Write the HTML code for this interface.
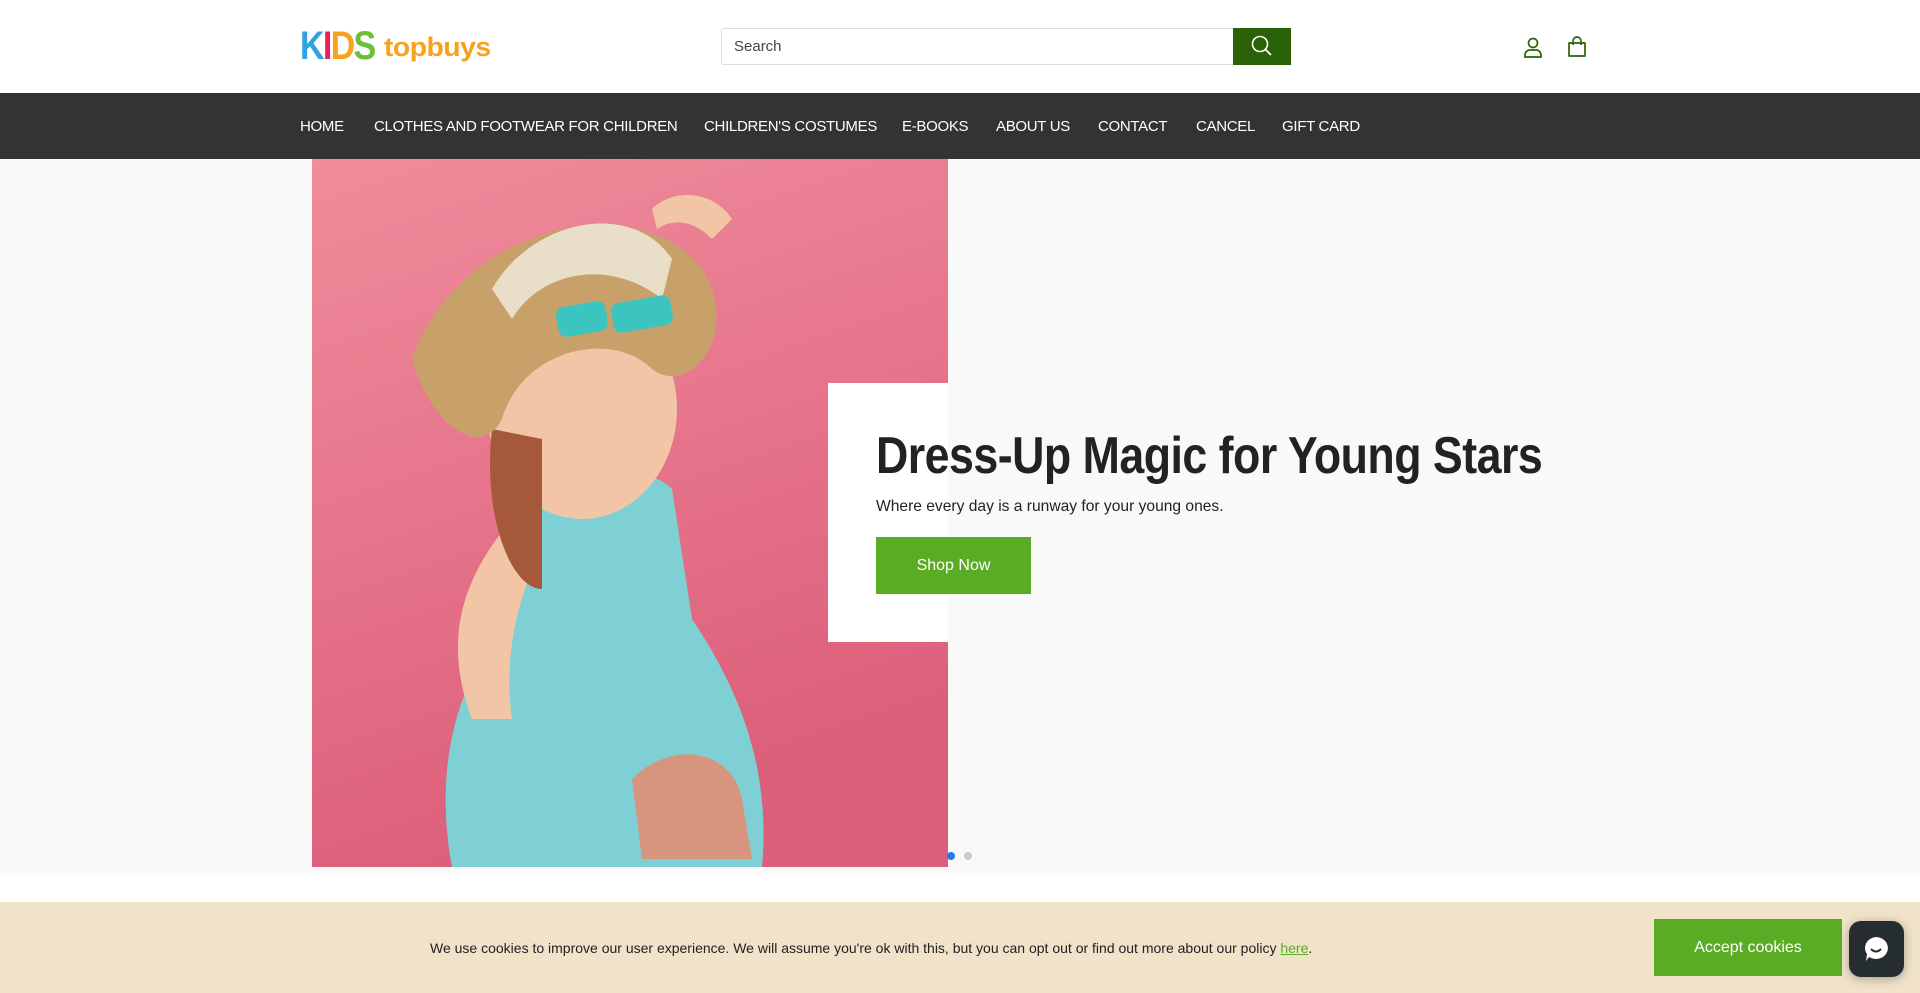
<!DOCTYPE html>
<html><head><meta charset="utf-8"><style>
*{margin:0;padding:0;box-sizing:border-box}
body{width:1920px;height:993px;overflow:hidden;font-family:"Liberation Sans",sans-serif;background:#fff;position:relative}
.abs{position:absolute}
#nav{top:93px;left:0;width:1920px;height:66px;background:#333}
#nav span{position:absolute;top:25px;color:#fff;font-size:15px;letter-spacing:-0.3px;white-space:nowrap}
#hero{top:159px;left:0;width:1920px;height:716px;background:#f9f9f9}
#cookie{top:902px;left:0;width:1920px;height:91px;background:#f0e3c9}
</style></head><body>
<div class="abs" style="left:300px;top:26px;font-weight:900;font-size:40px;letter-spacing:-2px;line-height:40px;transform:scaleX(0.85);transform-origin:left">
<span style="color:#2ea3e0">K</span><span style="color:#e8205c">I</span><span style="color:#f6a21c">D</span><span style="color:#6bbf3a">S</span></div>
<div class="abs" style="left:384px;top:32px;font-weight:900;font-size:27px;color:#f6a21c;letter-spacing:-0.5px;transform:scaleX(1.05);transform-origin:left">topbuys</div>
<div class="abs" style="left:721px;top:28px;width:513px;height:37px;border:1px solid #ddd;border-radius:3px 0 0 3px;background:#fff"><span style="position:absolute;left:12px;top:9px;font-size:15px;color:#444">Search</span></div>
<div class="abs" style="left:1233px;top:28px;width:58px;height:37px;background:#2a6208">
<svg width="58" height="37" viewBox="0 0 58 37"><circle cx="27" cy="16" r="7.5" fill="none" stroke="#fff" stroke-width="1.6"/><line x1="32.5" y1="21.5" x2="38" y2="27" stroke="#fff" stroke-width="1.8"/></svg></div>
<svg class="abs" style="left:1522px;top:36px" width="22" height="24" viewBox="0 0 22 24"><circle cx="11" cy="7" r="4.5" fill="none" stroke="#2a6208" stroke-width="1.7"/><path d="M3 21v-2a5 5 0 0 1 5-5h6a5 5 0 0 1 5 5v2z" fill="none" stroke="#2a6208" stroke-width="1.7"/></svg>
<svg class="abs" style="left:1566px;top:35px" width="22" height="24" viewBox="0 0 22 24"><path d="M3 8h16v13H3z" fill="none" stroke="#2a6208" stroke-width="1.7" stroke-linejoin="round"/><path d="M7 10V6a4 4 0 0 1 8 0v4" fill="none" stroke="#2a6208" stroke-width="1.7"/></svg>
<div id="nav" class="abs">
<span style="left:300px">HOME</span><span style="left:374px">CLOTHES AND FOOTWEAR FOR CHILDREN</span><span style="left:704px">CHILDREN'S COSTUMES</span><span style="left:902px">E-BOOKS</span><span style="left:996px">ABOUT US</span><span style="left:1098px">CONTACT</span><span style="left:1196px">CANCEL</span><span style="left:1282px">GIFT CARD</span>
</div>
<div id="hero" class="abs"></div>
<svg class="abs" style="left:312px;top:159px" width="636" height="708" viewBox="0 0 636 708">
<defs><linearGradient id="g" x1="0" y1="0" x2="0.3" y2="1"><stop offset="0" stop-color="#f08c9c"/><stop offset="1" stop-color="#dc5e7a"/></linearGradient></defs>
<rect width="636" height="708" fill="url(#g)"/>
<path d="M140 708 C120 600 150 520 190 470 L200 330 C230 300 330 300 360 330 L380 460 C420 520 460 600 450 708 Z" fill="#7fd0d4"/>
<ellipse cx="270" cy="250" rx="95" ry="110" fill="#f1c5a6"/>
<path d="M200 360 C150 420 130 480 160 560 L200 560 C190 490 210 430 230 390Z" fill="#f1c5a6"/>
<path d="M180 270 C170 360 200 430 230 430 L230 280Z" fill="#a6593a"/>
<path d="M100 200 C150 60 330 30 390 110 C430 170 380 240 340 210 C300 170 210 190 190 260 C170 300 120 270 100 200Z" fill="#c8a06a"/>
<path d="M180 130 C220 60 320 40 360 100 L350 140 C300 100 230 110 200 160Z" fill="#e9dfc8"/>
<rect x="300" y="140" width="60" height="30" rx="8" fill="#3cc4c0" transform="rotate(-10 330 155)"/>
<rect x="245" y="145" width="50" height="30" rx="8" fill="#3cc4c0" transform="rotate(-10 270 160)"/>
<path d="M320 620 C360 580 420 590 430 640 L440 700 L330 700Z" fill="#d8957d"/>
<path d="M340 50 C360 30 400 30 420 60 L400 80 C380 60 360 60 345 70Z" fill="#f1c5a6"/>
</svg>
<div class="abs" style="left:828px;top:383px;width:120px;height:259px;background:#fff"></div>
<div class="abs" style="left:876px;top:426px;font-size:52px;font-weight:bold;color:#222;letter-spacing:-0.6px;white-space:nowrap;transform:scaleX(0.86);transform-origin:left">Dress-Up Magic for Young Stars</div>
<div class="abs" style="left:876px;top:498px;font-size:15.6px;color:#222">Where every day is a runway for your young ones.</div>
<div class="abs" style="left:876px;top:537px;width:155px;height:57px;background:#5aac24;color:#fff;font-size:16px;text-align:center;line-height:57px">Shop Now</div>
<div class="abs" style="left:947px;top:852px;width:8px;height:8px;border-radius:50%;background:#1a7ee6"></div>
<div class="abs" style="left:964px;top:852px;width:8px;height:8px;border-radius:50%;background:#ccc"></div>
<div id="cookie" class="abs">
<div class="abs" style="left:430px;top:38px;font-size:14px;color:#222;white-space:nowrap">We use cookies to improve our user experience. We will assume you're ok with this, but you can opt out or find out more about our policy <u style="color:#5aac24">here</u>.</div>
<div class="abs" style="left:1654px;top:17px;width:188px;height:57px;background:#5aac24;color:#fff;font-size:16px;text-align:center;line-height:57px">Accept cookies</div>
</div>
<div class="abs" style="left:1849px;top:921px;width:55px;height:56px;border-radius:12px;background:#262d31;box-shadow:0 2px 10px rgba(0,0,0,.3)">
<svg width="55" height="56" viewBox="0 0 55 56"><path d="M27 16a12 11 0 1 1-7 20l-3 4 1-7a12 11 0 0 1 9-17z" fill="#fff"/><path d="M22 28q5 5 10 0" fill="none" stroke="#262d31" stroke-width="2"/></svg></div>
</body></html>
